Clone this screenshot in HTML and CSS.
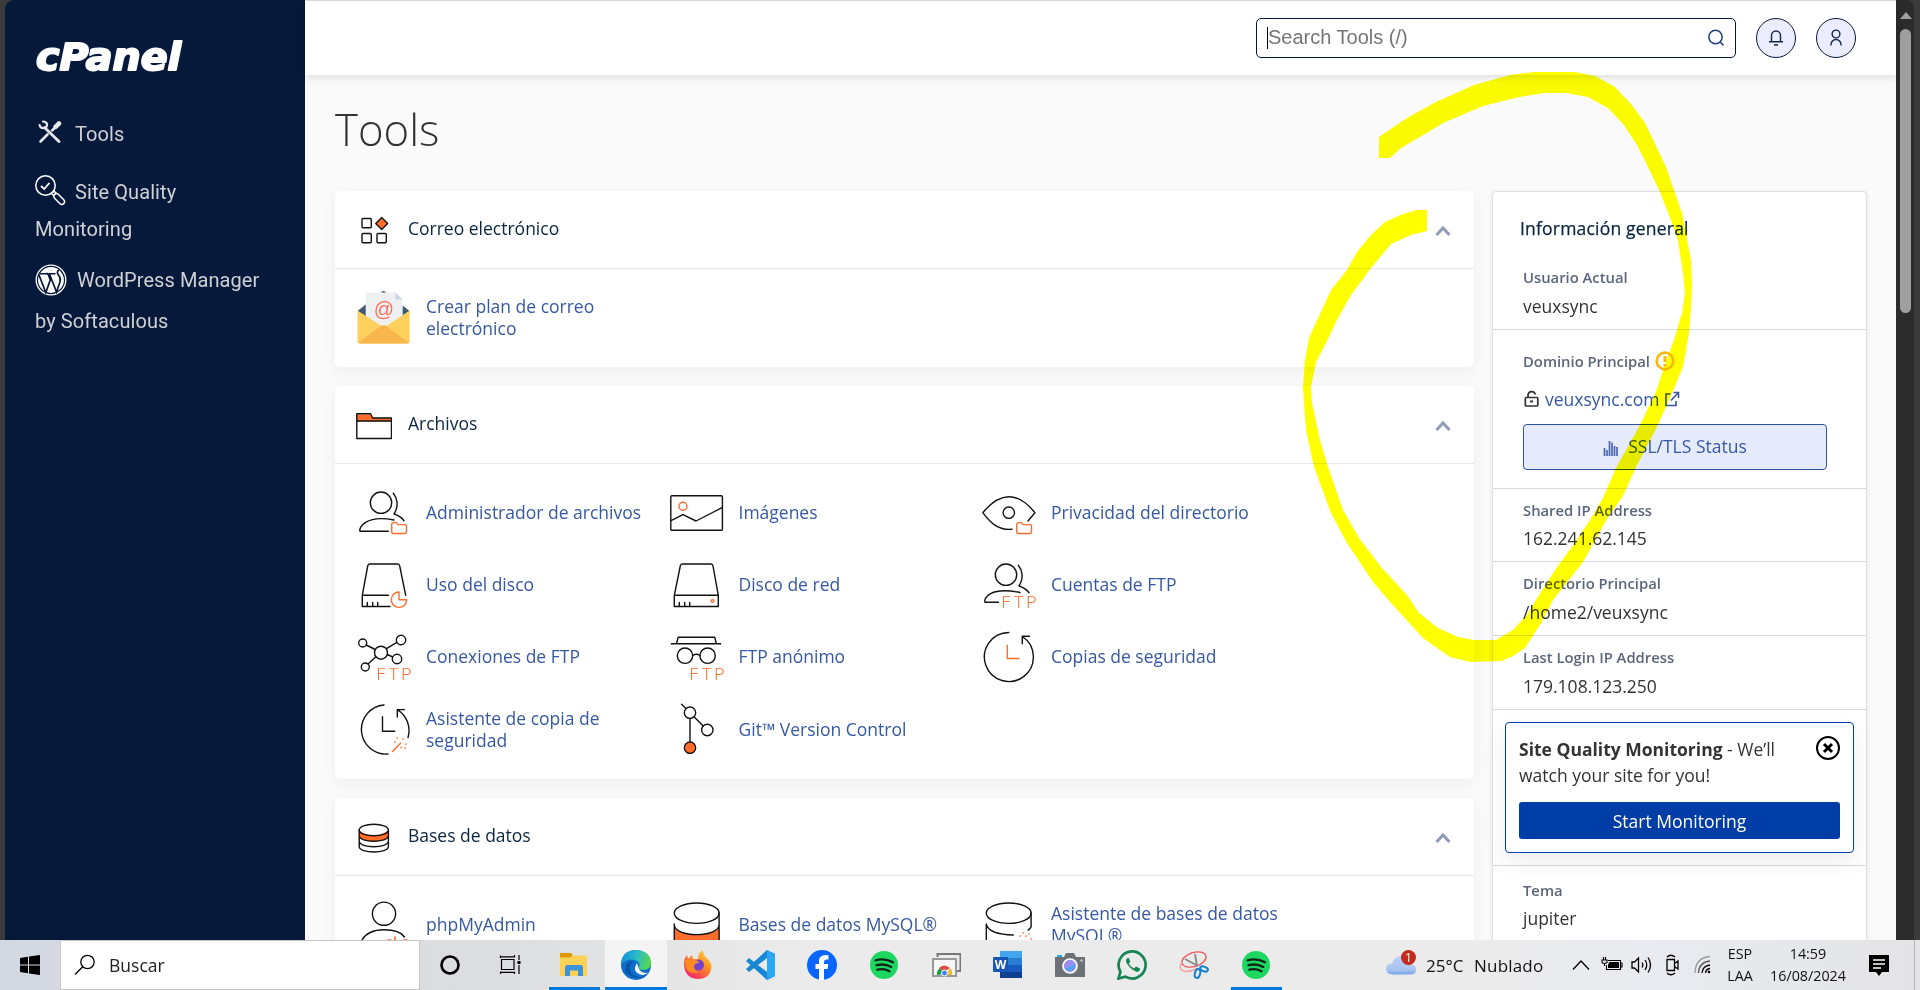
FILE: index.html
```html
<!DOCTYPE html>
<html lang="es">
<head>
<meta charset="utf-8">
<title>cPanel - Tools</title>
<link rel="stylesheet" href="styles.css">
</head>
<body>
<svg class="defs" width="0" height="0">
  <defs>
    <g id="folder-badge"><path class="o" d="M34.7 38.6q0-2 2-2h2.8l1.6 2h6.800q1.600 0 1.600 1.600v5.600q0 1.700-1.600 1.700h-11.400q-1.800 0-1.800-1.800z"/></g>
    <g id="ftp"><text class="ftp" x="19.500" y="49.800" textLength="35">FTP</text></g>
    <g id="person"><circle class="k" cx="24" cy="16.700" r="10.700"/><path class="k" d="M36.300 7.300c4 4.700 5.800 12.700.7 20.700 4.500 1.300 7.600 3.600 10 6.700"/></g>
    <g id="spotify"><circle cx="15" cy="15" r="14" fill="#1ed760"/><path d="M6.500 10.300q9.500-2.500 17.500 2M7.500 15.200q8-2 14.800 1.700M8.300 19.700q6.700-1.500 12.200 1.500" fill="none" stroke="#10251a" stroke-width="2.300" stroke-linecap="round"/></g>
  </defs>
</svg>
<div class="screen">
  <div class="window">
    <aside class="sidebar">
      <svg class="logo" width="150" height="42" viewBox="0 0 150 42"><text x="1" y="35" textLength="145" lengthAdjust="spacingAndGlyphs" class="logo-text">cPanel</text></svg>
      <nav>
        <a class="nav nav-tools"><svg width="24" height="24" viewBox="0 0 24 24"><g fill="none" stroke="#e6e8ec" stroke-linecap="round"><path d="M2.500 21.500l7-7" stroke-width="2.600"/><path d="M6.500 7.500l14.500 14" stroke-width="2.800"/><path d="M1.500 5q1 3.500 4.500 3t3-4Q8 1.500 5 1.500" stroke-width="2.200"/><path d="M14 10.500l5-4.500" stroke-width="2.500"/><path d="M17.500 6.800l3.500-3.300" stroke-width="4.500"/></g></svg><span>Tools</span></a>
        <a class="nav nav-sqm"><svg width="31" height="31" viewBox="0 0 31 31"><g fill="none" stroke="#fff" stroke-width="1.500"><circle cx="10.500" cy="10.500" r="9.700"/><path d="M6 11l3.200 3 5.200-6" stroke-width="1.800"/><path d="M16.500 18.500l2.500-2.500 2 2-2.500 2.500z"/><path d="M19.500 19.500q2-2 4 0l5 5q2 2 .3 4t-4 0l-5-5q-2-2-.3-4z"/></g></svg><span>Site Quality</span><br>Monitoring</a>
        <a class="nav nav-wp"><svg width="32" height="32" viewBox="0 0 32 32"><circle cx="16" cy="16" r="14.800" fill="none" stroke="#fff" stroke-width="1.300"/><circle cx="16" cy="16" r="12.900" fill="#fff"/><path d="M3.800 10.500l7 18 4.500-12.500-2-5.500q-.4-1-2-1.200M14.500 10l7 18 3.500-10q1-4-1.500-7t.5-5" fill="none" stroke="#06193b" stroke-width="1.700"/><path d="M5 9.700h8M13.500 9.700h7" stroke="#06193b" stroke-width="1.400"/></svg><span>WordPress Manager</span><br>by Softaculous</a>
      </nav>
    </aside>
    <div class="content">
      <header class="topbar">
        <div class="search"><span class="caret"></span><span class="placeholder">Search Tools (/)</span><svg width="18" height="20" viewBox="0 0 18 20"><circle cx="8.500" cy="9" r="6.700"/><path d="M13 13.700l3.500 3.800"/></svg></div>
        <div class="round"><svg width="20" height="20" viewBox="0 0 20 20"><path d="M5.500 13.500V7.500a4.500 4.500 0 0 1 9 0v6M3 13.700h14M8 17h4"/></svg></div>
        <div class="round"><svg width="20" height="20" viewBox="0 0 20 20"><circle cx="10" cy="6" r="3.900"/><path d="M5 17.500v-1a5 5 0 0 1 10 0v1"/></svg></div>
      </header>
      <main>
        <h1>Tools</h1>
        <div class="columns">
          <div class="panels">
            <section class="panel mail">
              <div class="phead"><svg width="36" height="36" viewBox="0 0 36 36"><g class="k"><rect x="6" y="5.500" width="9.300" height="9.300" rx="1"/><rect x="6" y="20.500" width="9.300" height="9.300" rx="1"/><rect x="21" y="20.500" width="9.300" height="9.300" rx="1"/></g><path d="M25.700 4.500l6 6-6 6-6-6z" fill="#ff6c2c" stroke="#111" stroke-width="1.300" stroke-linejoin="round"/></svg><h2>Correo electrónico</h2><svg class="chev" width="16" height="12" viewBox="0 0 16 12"><path d="M1.500 10L8 3l6.500 7"/></svg></div>
              <div class="items">
                <a class="item"><svg width="54" height="54" viewBox="0 0 54 54"><path d="M.5 20L26.500-.5l26 20.500-26 20z" fill="#3f5a70"/><path d="M8.700 1.500h29.500l7.500 7.500v27h-37z" fill="#eff0f1"/><path d="M38.200 1.500V8.500h7.500z" fill="#cdd4e4"/><text x="26.800" y="24.500" text-anchor="middle" class="at">@</text><path d="M.5 19.500l26.500 17 25.700-17V50q0 2.500-2.500 2.500H3Q.5 52.500.5 50z" fill="#ffd15c"/><path d="M1 52L23 35.500q3.500-2.500 7 0L52 52q-1 .5-2 .5H3z" fill="#f8b64c"/></svg><span>Crear plan de correo electrónico</span></a>
              </div>
            </section>
            <section class="panel files">
              <div class="phead"><svg width="36" height="36" viewBox="0 0 36 36"><path d="M.8 6.500h13.800L16.500 10h19v3.300H.8z" fill="#ff6c2c"/><path class="k" d="M.8 5.800h13.800l2.100 4.200H35.500v20.500H.8zM.8 13h34.700"/></svg><h2>Archivos</h2><svg class="chev" width="16" height="12" viewBox="0 0 16 12"><path d="M1.500 10L8 3l6.500 7"/></svg></div>
              <div class="items">
                <a class="item"><svg width="54" height="54" viewBox="0 0 54 54"><use href="#person"/><path class="k" d="M31.300 45.300H3C1.500 42 8 28.500 37 34"/><use href="#folder-badge"/></svg><span>Administrador de archivos</span></a>
                <a class="item"><svg width="54" height="54" viewBox="0 0 54 54"><rect class="k" x=".8" y="9.700" width="51.600" height="34.500" rx="1"/><path class="k" d="M1 34.700l12-6L26 35l26-13.300"/><circle class="o" cx="13" cy="20.300" r="4"/></svg><span>Imágenes</span></a>
                <a class="item"><svg width="54" height="54" viewBox="0 0 54 54"><path class="k" d="M30 43.300C15 44.500 7 35 .8 26.700 8 18 16 10.700 26.800 10.700S46 18 52.900 26.700L46 35"/><circle class="k" cx="26.800" cy="26.700" r="5.700"/><use href="#folder-badge"/></svg><span>Privacidad del directorio</span></a>
                <a class="item"><svg width="54" height="54" viewBox="0 0 54 54"><path class="k" d="M31.500 37.300H5.300L10.700 8q.4-2 2-2h28q1.700 0 2 2l6 29.300M5.300 37.300v11.200H33M10.300 44.500v4M15.700 44.500v4M20.700 44.500v4"/><path class="o" d="M42 34a7.700 7.700 0 1 0 7.700 7.700H42z"/></svg><span>Uso del disco</span></a>
                <a class="item"><svg width="54" height="54" viewBox="0 0 54 54"><path class="k" d="M4.300 37.300h44L43 8q-.4-2-2-2H12.300q-1.700 0-2 2l-6 29.300v11.200h44V37.300M9.300 44.500v4M14.700 44.500v4M19.700 44.500v4"/><circle class="o" cx="42.600" cy="43" r="1.400"/></svg><span>Disco de red</span></a>
                <a class="item"><svg width="54" height="54" viewBox="0 0 54 54"><use href="#person"/><path class="k" d="M16.500 44.300H3C1.500 40 8 28.500 38 34.500"/><use href="#ftp"/></svg><span>Cuentas de FTP</span></a>
                <a class="item"><svg width="54" height="54" viewBox="0 0 54 54"><g class="k"><circle cx="5.700" cy="13" r="4"/><circle cx="44" cy="10" r="4.700"/><circle cx="24" cy="22.700" r="6.500"/><circle cx="40" cy="29" r="4.700"/><circle cx="8.300" cy="37" r="4"/><path d="M9.200 15l9 4.500M39.900 12.400l-10.500 6.300M30.400 24.500l5.300 2.500M11 34l8-7.300"/></g><use href="#ftp"/></svg><span>Conexiones de FTP</span></a>
                <a class="item"><svg width="54" height="54" viewBox="0 0 54 54"><g class="k"><path d="M1.300 13.700h49.400M6.500 13.500l1.700-6.200h36.500l1.700 6.200M22.700 25.500q3.700-2.500 7.200 0"/><circle cx="15" cy="25.700" r="7.700"/><circle cx="37.600" cy="25.700" r="7.700"/></g><use href="#ftp"/></svg><span>FTP anónimo</span></a>
                <a class="item"><svg width="54" height="54" viewBox="0 0 54 54"><path class="k" d="M26.800 2.500a24.500 24.500 0 1 0 13.500 4M47.500 6.300h-7.200v7.500"/><path class="o" d="M25.300 14.700v13.800h12.200"/></svg><span>Copias de seguridad</span></a>
                <a class="item"><svg width="54" height="54" viewBox="0 0 54 54"><path class="k" d="M27 2a24.500 24.500 0 1 0 4 49M47.500 6.600h-7.200v7.500M40.300 6.600A24.500 24.500 0 0 1 51 34.500M25.500 13.700v14.500h12.200"/><path class="o" d="M35 49l9-9.300"/><path class="dots" d="M40 35h.1M46 36h.1M38 39h.1M49 41h.1M44 44.500h.1M48 45h.1"/></svg><span>Asistente de copia de seguridad</span></a>
                <a class="item"><svg width="54" height="54" viewBox="0 0 54 54"><path class="k" d="M11.600 1.300l4.400 4.300M20 15.500V39M24 13.700l9.300 9.300"/><circle class="k" cx="20" cy="9.700" r="5.700"/><circle class="k" cx="37.300" cy="27" r="5.700"/><circle cx="20" cy="44.700" r="5.700" fill="#ff6c2c" stroke="#111" stroke-width="1.300"/></svg><span>Git™ Version Control</span></a>
              </div>
            </section>
            <section class="panel db">
              <div class="phead"><svg width="36" height="36" viewBox="0 0 36 36"><path d="M3 10v6.500q4 5 14.500 5t15-5V10q-5 5-15 5T3 10z" fill="#ff6c2c"/><g class="k"><ellipse cx="17.800" cy="10" rx="14.600" ry="5.800"/><path d="M3.200 10v16.500c0 7.300 29.200 7.300 29.200 0V10M3.200 15.500c0 7.700 29.200 7.700 29.200 0M3.200 21c0 7.700 29.200 7.700 29.200 0"/></g></svg><h2>Bases de datos</h2><svg class="chev" width="16" height="12" viewBox="0 0 16 12"><path d="M1.500 10L8 3l6.500 7"/></svg></div>
              <div class="items">
                <a class="item"><svg width="54" height="54" viewBox="0 0 54 54"><circle class="k" cx="27" cy="15.700" r="11.600"/><path class="k" d="M4.500 43c4-8 12-11.200 22.500-11.200 10 0 17 1.800 20.500 7.200"/><path class="dots" d="M31 42h3M38 39v3M47 42h3"/></svg><span>phpMyAdmin</span></a>
                <a class="item"><svg width="54" height="54" viewBox="0 0 54 54"><path d="M4.300 30c8 9 36 9 45 0v20h-45z" fill="#ff6c2c"/><g class="k"><ellipse cx="26.700" cy="15.200" rx="22.400" ry="10.200"/><path d="M49.100 15v30M4.300 26v20M4.300 26.500c0 13.500 44.800 13.500 44.800 0"/></g></svg><span>Bases de datos MySQL®</span></a>
                <a class="item"><svg width="54" height="54" viewBox="0 0 54 54"><g class="k"><ellipse cx="26.700" cy="15.200" rx="22.400" ry="10.200"/><path d="M49.100 15v13q0 2.500-3 4M4.300 26v20M4.300 26.500q3 10 27 10.500"/></g><path class="dots" d="M41 35h.1M47 36h.1M38 38h.1M44 38h.1M49 41h.1"/></svg><span>Asistente de bases de datos MySQL®</span></a>
              </div>
            </section>
          </div>
          <aside class="info">
            <h2>Información general</h2>
            <div class="row r1"><b>Usuario Actual</b><p>veuxsync</p></div>
            <div class="row r2"><b>Dominio Principal <svg width="20" height="20" viewBox="0 0 20 20"><circle cx="10" cy="10" r="8.300" fill="none" stroke="#f5b915" stroke-width="2.700"/><path d="M10 5v6M10 13v2.500" stroke="#f5b915" stroke-width="3"/></svg></b>
              <p class="domain"><svg width="18" height="18" viewBox="0 0 18 18"><g fill="none" stroke="#333" stroke-width="1.700"><rect x="2.300" y="7.500" width="12.500" height="8.500" rx="1"/><path d="M5 7V5a3.700 3.700 0 0 1 7.300-.5"/></g><path d="M7 10.500h3v2H7z" fill="#333"/></svg><a>veuxsync.com</a><svg class="ext" width="16" height="16" viewBox="0 0 16 16"><path d="M6.500 3H2v11.500h10V10M9.500 1.500h5V7M14 2L7 9.500" fill="none" stroke="#3658a3" stroke-width="1.600"/></svg></p>
              <div class="ssl"><svg width="16" height="16" viewBox="0 0 16 16"><path d="M1.500 16V8M4 16v-6M6.500 16V1M9 16V2.500M11.500 16V6M14 16V7" stroke="#4c66ad" stroke-width="1.700"/></svg>SSL/TLS Status</div></div>
            <div class="row r3"><b>Shared IP Address</b><p>162.241.62.145</p></div>
            <div class="row r4"><b>Directorio Principal</b><p>/home2/veuxsync</p></div>
            <div class="row r5"><b>Last Login IP Address</b><p>179.108.123.250</p></div>
            <div class="row promo"><div class="card"><div class="msg"><p><strong>Site Quality Monitoring</strong> - We’ll<br>watch your site for you!</p><svg width="24" height="24" viewBox="0 0 24 24"><circle cx="12" cy="12" r="11" fill="none" stroke="#000" stroke-width="2"/><path d="M8 8l8 8M16 8l-8 8" stroke="#000" stroke-width="3"/></svg></div><div class="start">Start Monitoring</div></div></div>
            <div class="row r7"><b>Tema</b><p>jupiter</p></div>
          </aside>
        </div>
      </main>
    </div>
    <div class="scroll"><i class="up"></i><i class="thumb"></i></div>
  </div>
  <footer class="taskbar">
    <div class="startbtn"><svg width="20" height="20" viewBox="0 0 20 20"><path d="M0 3l8-1.300V9.500H0zM9 1.500L20 0v9.500H9zM0 10.500h8v7.800L0 17zM9 10.500h11V20L9 18.500z"/></svg></div>
    <div class="find"><svg width="22" height="22" viewBox="0 0 22 22"><circle cx="13.500" cy="8" r="6.700"/><path d="M8.700 12.800L1 20.500"/></svg>Buscar</div>
    <div class="app"><svg width="30" height="30" viewBox="0 0 30 30"><circle cx="15" cy="15" r="8.500" fill="none" stroke="#000" stroke-width="2.600"/></svg></div>
    <div class="app"><svg width="30" height="30" viewBox="0 0 30 30"><path d="M4.500 9.500H17v10H4.500zM3.500 5.500V8M3.500 6.800h14V5M3.500 24v-2.500M3.500 22.300h14V24M22 5v5M22 15v9" fill="none" stroke="#000" stroke-width="1.200"/><path d="M20.500 11h3v3h-3z"/></svg></div>
    <div class="app on"><svg width="30" height="30" viewBox="0 0 30 30"><path d="M1 3h11l2 2.500h14V26H1z" fill="#ffd257"/><path d="M1 3h11l1.500 2-2 2.500H1z" fill="#dd9a00"/><path d="M6 26v-8.500q0-2.500 2.500-2.500h13q2.500 0 2.500 2.500V26h-5v-5.500h-8V26z" fill="#3b93dd"/></svg></div>
    <div class="app on active"><svg width="30" height="30" viewBox="0 0 30 30"><defs><linearGradient id="e1" x1="0" y1=".3" x2="1" y2=".5"><stop offset="0" stop-color="#0c8fdb"/><stop offset=".5" stop-color="#2bbcca"/><stop offset="1" stop-color="#58d64c"/></linearGradient></defs><circle cx="15" cy="15" r="15" fill="#0b6fcb"/><path d="M0 14Q1 0 15 0q15 1 15 13 0 7-8 7-5 0-4-3 2-3-2-6Q8 7 0 14z" fill="url(#e1)"/><path d="M12 11q-6 8 0 14 8 5 15-1-10 8-22-1Q2 12 12 11z" fill="#0a54a5"/><path d="M16 13q-6 9 5 12 3 .5 7-3l-2 1q-6 0-8-4-1-3-2-6z" fill="#f3f3f4"/></svg></div>
    <div class="app"><svg width="30" height="30" viewBox="0 0 30 30"><defs><linearGradient id="f1" x1="1" y1="0" x2=".3" y2="1"><stop offset="0" stop-color="#ffe83a"/><stop offset=".5" stop-color="#ff8a26"/><stop offset="1" stop-color="#f4246b"/></linearGradient></defs><path d="M1 13q0-5 3-8l1 4 4-4 1 4h5q0-6 4.500-9 1 5 4 8 5 4 5 9-1 12-14 12Q1 28 1 13z" fill="url(#f1)"/><circle cx="15.500" cy="15" r="5.500" fill="#7542ce"/><path d="M2 10h8q6 0 6 3-5 0-5 4 1 5 6 5-11 3-14-4z" fill="#ff8b22"/></svg></div>
    <div class="app"><svg width="30" height="30" viewBox="0 0 30 30"><path d="M22 0L30 4v22l-8 4L1 11l3-3 18 14V8L4 22l-3-3z" fill="#1688d4"/><path d="M22 0l8 4v22l-8 4z" fill="#2ba6f1"/></svg></div>
    <div class="app"><svg width="30" height="30" viewBox="0 0 30 30"><circle cx="15" cy="15" r="15" fill="#0866ff"/><path d="M12 30V19H8.500v-5H12v-2.500Q12 5 18.500 5l3 .3v4.200h-2.300q-2.200 0-2.200 2.500v2h4.300l-.8 5H17v11z" fill="#fff"/></svg></div>
    <div class="app"><svg width="30" height="30" viewBox="0 0 30 30"><use href="#spotify"/></svg></div>
    <div class="app"><svg width="30" height="30" viewBox="0 0 30 30"><path d="M6.500 7V4h23v17H26" fill="none" stroke="#777" stroke-width="2"/><rect x="2" y="9" width="23" height="17" fill="#f6f6f6" stroke="#999" stroke-width="2"/><path d="M6 25a7.500 7.500 0 0 1 3-7l4 6z" fill="#1a9b48"/><path d="M8 18q5-5 11 0l-6 4z" fill="#dd493c"/><path d="M19 18q3 3 2 7h-6z" fill="#f5bd21"/><circle cx="13.500" cy="23" r="3" fill="#4584ed" stroke="#fff"/></svg></div>
    <div class="app"><svg width="30" height="30" viewBox="0 0 30 30"><path d="M7 1h22v8H7z" fill="#41a5ee"/><path d="M7 8h22v7H7z" fill="#2b7cd3"/><path d="M7 15h22v7H7z" fill="#185abd"/><path d="M7 22h22v6H7z" fill="#103f91"/><rect y="7" width="15" height="15" rx="1" fill="#1856b5"/><text x="7.500" y="18.500" text-anchor="middle" class="word">W</text></svg></div>
    <div class="app"><svg width="30" height="30" viewBox="0 0 30 30"><path d="M2 5h5v3H2z" fill="#24a8df"/><path d="M0 7h9l2-4h8l2 4h9v20H0z" fill="#6b7177"/><circle cx="15" cy="16" r="7" fill="#9a8dee" stroke="#fff" stroke-width="1.700"/><path d="M10 19a6 6 0 0 0 10-5z" fill="#48aaf0"/><circle cx="26.500" cy="10.500" r="1.200" fill="#ccc"/></svg></div>
    <div class="app"><svg width="30" height="30" viewBox="0 0 30 30"><path d="M1.500 28.500l1.900-6.800a13.500 13.500 0 1 1 5 5z" fill="none" stroke="#148552" stroke-width="2.700"/><path d="M10.500 8q-3 2 0 6.500 4 5.500 9.500 7.500 3-.5 3-3.500l-4-2-2 2q-4-2-5.200-5l1.500-2-1.500-3.500z" fill="#148552"/></svg></div>
    <div class="app"><svg width="30" height="30" viewBox="0 0 30 30"><ellipse cx="15" cy="9.500" rx="12.500" ry="7" transform="rotate(-18 15 9.500)" fill="none" stroke="#ee585c" stroke-width="1.300"/><path d="M3 12Q-2 20 7 21.500q6 0 11-3" fill="none" stroke="#f0a3a3" stroke-width="1.500"/><path d="M16 4l2 12M6 9l13 7" stroke="#888" stroke-width="1.800"/><ellipse cx="18.500" cy="23.500" rx="2.600" ry="4.500" transform="rotate(15 18.500 23.500)" fill="none" stroke="#0f80cf" stroke-width="2"/><ellipse cx="25" cy="19" rx="4" ry="2.300" transform="rotate(20 25 19)" fill="none" stroke="#0f80cf" stroke-width="2"/></svg></div>
    <div class="app on"><svg width="30" height="30" viewBox="0 0 30 30"><use href="#spotify"/></svg></div>
    <div class="tray">
      <svg class="cloud" width="32" height="30" viewBox="0 0 32 30"><defs><linearGradient id="cl" x1="0" y1="0" x2="0" y2="1"><stop offset="0" stop-color="#bcd0f5"/><stop offset=".75" stop-color="#a9c4f2"/><stop offset="1" stop-color="#74a2e8"/></linearGradient></defs><path d="M7 24.500Q0 24 0 19t6-5.500Q8 6 15 6t9 8.500q6 0 6 5t-6 5z" fill="url(#cl)"/><circle cx="22.500" cy="7.500" r="7.500" fill="#c42b1c"/><text x="22.500" y="11.500" text-anchor="middle" class="one">1</text></svg>
      <span class="temp">25°C</span><span class="sky">Nublado</span>
      <svg class="t1" width="18" height="12" viewBox="0 0 18 12"><path d="M1 10.500L9 2l8 8.500"/></svg>
      <svg class="t2" width="22" height="18" viewBox="0 0 22 18"><path d="M7 4.500h12.500v9H5.500V9M19.500 7H21v4h-1.500M2.500 1v3M4.500 1v3M1 4h5v2.500q-2.500 2-5 0zM3.500 7.500V10"/><path d="M8.500 6h9.500v6h-11V8.500z" fill="#000" stroke="none"/></svg>
      <svg class="t3" width="22" height="20" viewBox="0 0 22 20"><path d="M1 7h2.500l4-4v14l-4-4H1zM11 7.500q1.700 2.500 0 5M14 5q3.500 5 0 10M17 2.500q5 7.500 0 15"/></svg>
      <svg class="t4" width="18" height="22" viewBox="0 0 18 22"><path d="M3 5.500h7.500v11H3zM10.500 9.500L14 7v8l-3.500-2.500M3 3Q6.800-.5 11 3M3 19q3.800 3.500 8 0"/></svg>
      <svg class="t5" width="18" height="20" viewBox="0 0 18 20"><path d="M1 18Q1.500 2.500 16 1.500" stroke="#999"/><path d="M4.500 18Q5 7 16 6" stroke="#555"/><path d="M8 18q.5-7 8-8M11.500 18q.5-4 4.500-4.500"/><circle cx="15" cy="17" r="1.300" fill="#000" stroke="none"/></svg>
      <span class="two lang">ESP<br>LAA</span><span class="two clock">14:59<br>16/08/2024</span>
      <svg class="note" width="20" height="21" viewBox="0 0 20 21"><path d="M0 0h20v17h-7l-3 4-3-4H0z" fill="#000" stroke="none"/><path d="M4 5h12M4 9h12M4 13h8" stroke="#fff"/></svg>
      <i class="peek"></i>
    </div>
  </footer>
  <svg class="marker" width="1920" height="990" viewBox="0 0 1920 990"><path d="M1379 137L1407 118 1436 102 1474 85 1510 75 1535 72H1575L1595 76 1615 87 1631 104 1645 123 1666 167 1682 213 1691 260 1692 285 1691 307 1689 333 1683 367 1672 393 1657 427 1636 467 1623 496 1608 517 1583 562 1553 600 1541 623 1525 648 1513 656 1502 661 1470 662 1450 657 1423 638 1391 603 1373 582 1347 543 1331 513 1314 467 1306 430 1303 387 1305 360 1309 338 1331 290 1347 270 1357 252 1371 235 1385 222 1403 214 1417 210H1427V231L1411 235 1391 244 1371 268 1351 295 1337 320 1326 343 1316 362 1311 387 1312 403 1320 440 1328 467 1343 510 1359 538 1381 567 1407 595 1419 613 1438 628 1458 637 1474 640H1496L1513 630 1527 615 1539 595 1557 567 1575 543 1592 517 1603 498 1616 468 1640 425 1656 392 1664 367 1674 340 1682 313 1685 293 1683 273 1678 240 1672 223 1660 192 1648 167 1637 145 1624 125 1608 108 1588 97 1566 93H1544L1519 97 1483 106 1443 123 1425 134 1401 148 1390 158H1379Z"/></svg>
</div>
</body>
</html>
```
FILE: styles.css
```css
* { box-sizing: border-box; }
body { margin: 0; overflow: hidden; font-family: "Open Sans", "Noto Sans", sans-serif; }
.defs { position: absolute; }
p, h1, h2 { margin: 0; font-weight: 400; }
svg { display: block; flex: none; }
.screen { position: relative; width: 1920px; height: 990px; overflow: hidden; background: #3b3b3b; display: flex; flex-direction: column; }
.window { height: 940px; padding-left: 5px; padding-right: 6px; display: flex; overflow: hidden; flex: none; }

.sidebar { width: 300px; background: #06193b; border-top-left-radius: 9px; padding: 35px 0 0 30px; flex: none; }
.logo { overflow: visible; }
.logo-text { font: italic bold 37px "DejaVu Sans", sans-serif; fill: #fff; stroke: #fff; stroke-width: 2; stroke-linejoin: round; }
.nav { display: block; font: 400 20px/37px Roboto, sans-serif; color: #cfd1d4; white-space: nowrap; letter-spacing: .08px; }
.nav svg { display: inline-block; }
.nav-tools { padding-top: 39px; }
.nav-tools svg { margin: 0 13px 0 3px; vertical-align: -3px; }
.nav-sqm { padding-top: 21px; }
.nav-sqm svg { margin-right: 9px; vertical-align: -7px; }
.nav-wp { padding-top: 12px; line-height: 41px; }
.nav-wp svg { margin-right: 10px; vertical-align: -9px; }

.content { flex: 1; background: #fafafa; border-top: 1px solid #dedede; min-width: 0; }
.topbar { height: 74px; background: #fff; box-shadow: 0 2px 8px rgba(0,0,0,.12); display: flex; justify-content: flex-end; align-items: flex-start; padding: 17px 40px 0 0; position: relative; }
.search { width: 480px; height: 40px; border: 1px solid #06193b; border-radius: 5px; display: flex; align-items: center; padding: 0 10px; margin-right: 20px; background: #fff; }
.caret { width: 1px; height: 22px; background: #000; }
.placeholder { flex: 1; font: 20px "Liberation Sans", sans-serif; color: #757575; padding-bottom: 2px; }
.search svg, .round svg { fill: none; stroke: #1d3f7c; stroke-width: 1.500; }
.round { width: 40px; height: 40px; border-radius: 50%; border: 1px solid #06193b; background: #ebecfd; display: grid; place-items: center; margin-right: 20px; }
.round:last-child { margin-right: 0; }
.round svg { stroke: #16264c; stroke-width: 1.400; }

main { padding: 24px 29px 0 30px; }
h1 { font-size: 43.700px; line-height: 60px; font-weight: 300; color: #333; }
.columns { display: flex; gap: 18px; padding-top: 32px; }
.panels { width: 1139px; display: flex; flex-direction: column; gap: 19px; flex: none; }
.panel { background: #fff; border-radius: 5px; box-shadow: 0 4px 16px rgba(0,0,0,.05); }
.phead { height: 78px; border-bottom: 1px solid #e3e6f0; display: flex; align-items: center; padding: 2px 23px 0 21px; }
.phead h2 { font-size: 17.500px; color: #0a2540; flex: 1; padding: 0 0 5px 16px; }
.chev { fill: none; stroke: #8f9bb7; stroke-width: 3; }
.items { display: grid; grid-template-columns: repeat(3, 312.500px); grid-auto-rows: 72.400px; padding-left: 22px; }
.item { display: flex; align-items: center; gap: 15px; font-size: 17.500px; line-height: 22px; color: #3658a3; }
.item span { width: 232px; padding-bottom: 2px; }
.mail { height: 176px; }
.mail .items { padding-top: 13px; }
.files { height: 393px; }
.files .items { padding-top: 12.500px; }
.db { height: 260px; }
.db .items { padding-top: 13px; }
.k { fill: none; stroke: #111; stroke-width: 1.400; stroke-linejoin: round; stroke-linecap: round; }
.o { fill: none; stroke: #ff6c2c; stroke-width: 1.400; stroke-linejoin: round; }
.dots { fill: none; stroke: #ff6c2c; stroke-width: 1.700; stroke-linecap: round; }
.ftp { font: 16.500px Roboto, sans-serif; fill: #ff6c2c; font-weight: 300; }
.at { font: 20px "Liberation Sans", sans-serif; fill: #ff7058; }

.info { width: 375px; height: 800px; background: #fff; border-radius: 4px; border: 1px solid #e0e0e0; box-shadow: 0 1px 4px rgba(0,0,0,.1); }
.info h2 { font-size: 17.500px; font-weight: 500; letter-spacing: .2px; -webkit-text-stroke: .25px #0a2540; color: #0a2540; line-height: 24px; padding: 24px 0 0 27px; }
.row { border-bottom: 1px solid #d9dadd; padding-left: 30px; }
.row b { display: flex; align-items: center; gap: 5px; font-size: 14.800px; line-height: 20px; font-weight: 600; color: #5b667c; }
.row p { font-size: 17.500px; line-height: 24px; color: #333; }
.r1 { height: 90px; padding-top: 27px; }
.r1 p, .r4 p, .r5 p { margin-top: 7px; }
.r2 { height: 159px; padding-top: 21px; }
.r2 p { margin-top: 16px; }
.domain { display: flex; align-items: center; gap: 4px; }
.domain a { color: #3658a3; }
.ext { margin-left: 1px; }
.ssl { width: 304px; height: 46px; margin-top: 13px; border: 1px solid #2c52a5; border-radius: 4px; background: #e6ebfb; color: #3658a3; font-size: 17.500px; display: flex; align-items: center; justify-content: center; gap: 9px; padding-bottom: 2px; }
.ssl svg { margin-top: 4px; }
.r3 { height: 73px; padding-top: 11px; }
.r3 p { margin-top: 6px; }
.r4, .r5 { height: 74px; padding-top: 11px; }
.promo { height: 156px; padding: 12px 12px 0; }
.card { height: 131px; border: 1px solid #003da6; border-radius: 4px; padding: 13px 13px 0; background: #fff; box-shadow: 0 10px 24px rgba(0,0,0,.07); }
.msg { display: flex; justify-content: space-between; height: 66px; }
.msg p { line-height: 26px; white-space: nowrap; }
.start { height: 37px; background: #003da6; color: #fff; border-radius: 3px; display: grid; place-items: center; font-size: 17.500px; }
.r7 { padding-top: 14px; border: 0; }
.r7 p { margin-top: 6px; }

.scroll { width: 18px; background: #2b2b2b; border-top-right-radius: 8px; padding: 12px 3px 0 4px; display: flex; flex-direction: column; align-items: center; gap: 10px; flex: none; }
.up { border: 6px solid transparent; border-top: 0; border-bottom: 7px solid #a0a0a0; }
.thumb { width: 11px; height: 284px; border-radius: 6px; background: #9f9f9f; }

.taskbar { height: 50px; display: flex; background: linear-gradient(90deg, #d4d8e2 0, #dcdddf 480px, #ebebeb 800px, #ebebec 1500px, #e9ebf0 1650px, #e4e4e6 1920px); flex: none; }
.startbtn { width: 60px; display: grid; place-items: center; }
.find { width: 360px; background: #fff; border: 1px solid #c6c6c6; display: flex; align-items: center; gap: 13px; padding-left: 13px; font-size: 17.500px; color: #222; margin-right: -1px; }
.find svg, .tray svg { fill: none; stroke: #000; stroke-width: 1.300; }
.tray .cloud { stroke: none; }
.tray .t2 { stroke-width: 1.100; }
.app { width: 62px; height: 50px; display: grid; place-items: center; }
.on { background: linear-gradient(#0078d7, #0078d7) center bottom / 51px 3px no-repeat; }
.active { background: #f4f4f5 linear-gradient(#0078d7, #0078d7) center bottom / 62px 3px no-repeat; }
.word { font: bold 12px "Open Sans", sans-serif; fill: #fff; }
.tray { flex: 1; display: flex; align-items: center; padding-left: 99px; color: #111; font-size: 17px; }
.one { font: 12px "Open Sans", sans-serif; fill: #fff; }
.temp { width: 40px; margin-left: 8px; }
.sky { width: 98px; margin-left: 8px; white-space: nowrap; letter-spacing: .2px; }
.t2 { margin-left: 11px; }
.t3 { margin-left: 8px; }
.t4 { margin-left: 11px; }
.t5 { margin-left: 12px; }
.two { font-size: 14.300px; line-height: 22px; text-align: center; white-space: nowrap; }
.lang { width: 40px; margin-left: 8px; }
.clock { width: 84px; margin-left: 6px; }
.note { margin-left: 19px; }
.peek { width: 6px; height: 50px; border-left: 1px solid #b5b5b5; margin-left: auto; }
.marker { position: absolute; left: 0; top: 0; fill: #ff0; mix-blend-mode: multiply; }
```
